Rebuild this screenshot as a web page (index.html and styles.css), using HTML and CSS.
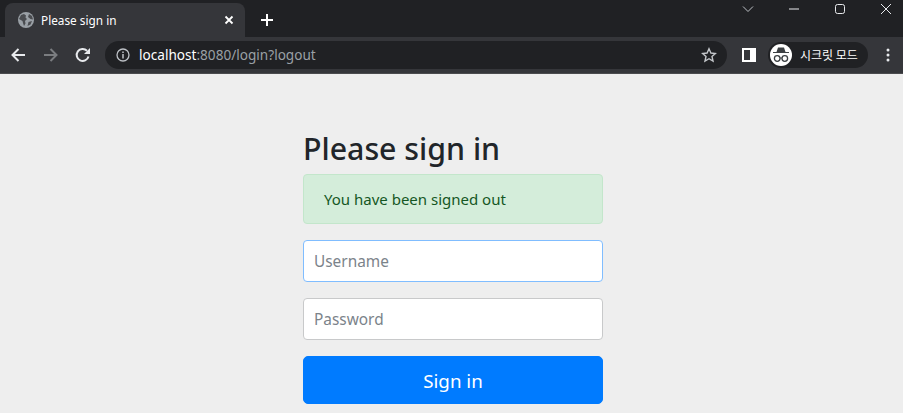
FILE: index.html
```html
<!DOCTYPE html>
<html lang="en">
  <head>
    <meta charset="UTF-8" />
    <title>Please sign in</title>
    <link rel="stylesheet" href="styles.css">
  </head>
  <body>
    <div class="tabstrip">
      <div class="tab">
        <svg class="favicon" width="16" height="16" viewBox="0 0 16 16">
          <circle cx="8" cy="8" r="8" fill="#9aa0a6" />
          <path d="M3 3l3-1 2 1.500-.5 2L9 7 7 9l.5 2.500L6 14l-1-3-.5-2L1 7zM11 2l3 2 1 3.500-2.500-.5L10 5zM10.500 10l3.500-1-1.500 3.500-3 1.500z" fill="#4a4c50" />
        </svg>
        <span class="tab-title">Please sign in</span>
        <svg class="tab-close" width="10" height="10" viewBox="0 0 10 10">
          <path d="M1.500 1.500l7 7M8.500 1.500l-7 7" stroke="#fff" stroke-width="1.800" />
        </svg>
      </div>
      <svg class="new-tab" width="14" height="14" viewBox="0 0 14 14">
        <path d="M7 1v12M1 7h12" stroke="#fff" stroke-width="2" />
      </svg>
      <div class="window-controls">
        <div class="win-btn">
          <svg width="12" height="8" viewBox="0 0 12 8"><path d="M1 1.500l5 5 5-5" fill="none" stroke="#bdc1c6" /></svg>
        </div>
        <div class="win-btn">
          <svg width="12" height="2" viewBox="0 0 12 2"><path d="M1 1h10" stroke="#e8eaed" /></svg>
        </div>
        <div class="win-btn">
          <svg width="12" height="12" viewBox="0 0 12 12"><rect x="1.500" y="1.500" width="9" height="9" rx="2" fill="none" stroke="#e8eaed" /></svg>
        </div>
        <div class="win-btn">
          <svg width="12" height="12" viewBox="0 0 12 12"><path d="M1 1l10 10M11 1L1 11" stroke="#e8eaed" /></svg>
        </div>
      </div>
    </div>

    <div class="toolbar">
      <div class="nav-buttons">
        <svg width="16" height="16" viewBox="0 0 16 16">
          <path d="M15 8H2.500M8.500 2L2.500 8l6 6" fill="none" stroke="#e8eaed" stroke-width="2" />
        </svg>
        <svg width="16" height="16" viewBox="0 0 16 16">
          <path d="M1 8h12.500M7.500 2l6 6-6 6" fill="none" stroke="#7b7d80" stroke-width="2" />
        </svg>
        <svg width="16" height="16" viewBox="0 0 16 16">
          <path d="M13.500 9.500A6 6 0 1 1 12 3.700" fill="none" stroke="#e8eaed" stroke-width="2" />
          <path d="M15 1v6H9z" fill="#e8eaed" />
        </svg>
      </div>
      <div class="omnibox">
        <svg class="info-icon" width="14" height="14" viewBox="0 0 14 14">
          <circle cx="7" cy="7" r="6" fill="none" stroke="#bdc1c6" stroke-width="1.300" />
          <path d="M7 6v4.500M7 3.500v1.400" stroke="#bdc1c6" stroke-width="1.500" />
        </svg>
        <span class="url"><span class="url-host">localhost</span>:8080/login?logout</span>
        <svg class="star" width="16" height="16" viewBox="0 0 16 16">
          <path d="M8 1.800l1.900 4.200 4.500.5-3.400 3 1 4.500L8 11.700 4 14l1-4.500-3.400-3 4.500-.5z" fill="none" stroke="#c4c7cb" stroke-width="1.400" />
        </svg>
      </div>
      <svg class="side-panel" width="14" height="14" viewBox="0 0 14 14">
        <path d="M0 0h14v14H0zM2 2v10h6V2z" fill="#fff" fill-rule="evenodd" />
      </svg>
      <div class="profile">
        <div class="avatar">
          <svg width="18" height="16" viewBox="0 0 18 16">
            <path d="M6 0.500h6l1.500 4.500H17v1H1V5h3.500z" fill="#3c4043" />
            <circle cx="5.200" cy="11.500" r="2.800" fill="none" stroke="#3c4043" stroke-width="1.300" />
            <circle cx="12.800" cy="11.500" r="2.800" fill="none" stroke="#3c4043" stroke-width="1.300" />
            <path d="M8 11h2" stroke="#3c4043" stroke-width="1.200" />
          </svg>
        </div>
        <span class="profile-label">시크릿 모드</span>
      </div>
      <svg class="menu-dots" width="4" height="14" viewBox="0 0 4 14">
        <circle cx="2" cy="2" r="1.500" fill="#e8eaed" />
        <circle cx="2" cy="7" r="1.500" fill="#e8eaed" />
        <circle cx="2" cy="12" r="1.500" fill="#e8eaed" />
      </svg>
    </div>

    <div class="page">
      <form class="signin-form">
        <h2 class="form-heading">Please sign in</h2>
        <div class="alert">You have been signed out</div>
        <input type="text" class="form-input form-input-focus" placeholder="Username" />
        <input type="password" class="form-input" placeholder="Password" />
        <button type="button" class="btn-signin">Sign in</button>
      </form>
    </div>
  </body>
</html>
```

FILE: styles.css
```css
html,
body {
  margin: 0;
  height: 413px;
  overflow: hidden;
}
body {
  font-family: 'Noto Sans', 'Open Sans', sans-serif;
  background-color: #eee;
}
.tabstrip {
  display: flex;
  align-items: flex-start;
  height: 37px;
  padding-left: 5px;
  background-color: #202124;
}
.tab {
  display: flex;
  align-items: center;
  box-sizing: border-box;
  width: 240px;
  height: 34px;
  margin-top: 3px;
  padding: 0 11px 0 13px;
  background-color: #35363a;
  border-radius: 8px 8px 0 0;
  color: #fff;
}
.favicon {
  flex: none;
}
.tab-title {
  flex: 1;
  margin-left: 7px;
  font-size: 11.800px;
}
.new-tab {
  margin: 13px 0 0 15px;
}
.window-controls {
  display: flex;
  margin-left: auto;
  margin-right: -6px;
}
.win-btn {
  display: flex;
  align-items: center;
  justify-content: center;
  width: 46px;
  height: 17px;
}
.toolbar {
  display: flex;
  align-items: center;
  box-sizing: border-box;
  height: 37px;
  padding: 0 0 1px 10px;
  background-color: #35363a;
  border-bottom: 1px solid #4a4b4e;
}
.nav-buttons {
  display: flex;
  gap: 16.500px;
}
.omnibox {
  display: flex;
  align-items: center;
  box-sizing: border-box;
  width: 622px;
  height: 28px;
  margin-left: 14px;
  padding: 0 10px 0 11px;
  background-color: #202124;
  border-radius: 14px;
}
.url {
  flex: 1;
  margin-left: 9px;
  font-size: 13.600px;
  color: #9aa0a6;
}
.url-host {
  color: #fff;
}
.side-panel {
  margin-left: 15px;
}
.profile {
  display: flex;
  align-items: center;
  width: 100px;
  height: 26px;
  margin-left: 12px;
  background-color: #202124;
  border-radius: 13px;
}
.avatar {
  display: flex;
  align-items: center;
  justify-content: center;
  width: 22px;
  height: 22px;
  margin-left: 2px;
  background-color: #fff;
  border-radius: 50%;
}
.profile-label {
  margin-left: 8px;
  font-family: 'Noto Sans CJK KR', sans-serif;
  font-size: 12px;
  color: #fff;
  white-space: nowrap;
}
.menu-dots {
  margin-left: 18px;
}
.page {
  display: flex;
  justify-content: center;
  padding: 54px 0 0 3px;
}
.signin-form {
  display: flex;
  flex-direction: column;
  width: 300px;
}
.form-heading {
  margin: 0 0 4px;
  font-size: 30.300px;
  font-weight: 550;
  line-height: 42px;
  color: #212529;
}
.alert {
  box-sizing: border-box;
  height: 50px;
  margin-bottom: 16px;
  padding: 12px 20px;
  background-color: #d4edda;
  border: 1px solid #c3e6cb;
  border-radius: 4px;
  font-size: 15px;
  line-height: 24px;
  color: #155724;
}
.form-input {
  box-sizing: border-box;
  height: 42px;
  margin-bottom: 16px;
  padding: 0 10px;
  background-color: #fff;
  border: 1px solid #c8c9ca;
  border-radius: 4px;
  font-family: inherit;
  font-size: 15.400px;
  outline: none;
}
.form-input::placeholder {
  color: #7b838a;
}
.form-input-focus {
  border-color: #80bdff;
}
.btn-signin {
  height: 48px;
  padding-top: 3px;
  background-color: #007bff;
  border: 1px solid #007bff;
  border-radius: 5px;
  font-family: inherit;
  font-size: 18.800px;
  color: #fff;
}
```
